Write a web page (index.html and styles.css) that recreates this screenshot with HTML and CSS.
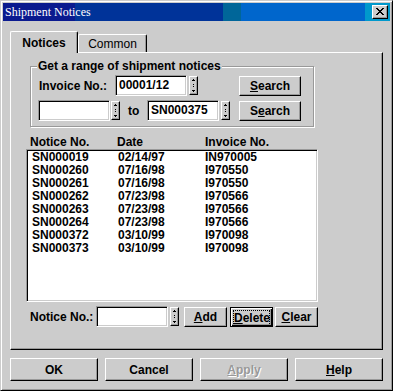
FILE: index.html
```html
<!DOCTYPE html>
<html lang="en">
<head>
  <meta charset="UTF-8" />
  <title>Shipment Notices</title>
  <link rel="stylesheet" href="styles.css">
</head>
<body>
  <div class="window">
    <div class="titlebar">
      <span class="title">Shipment Notices</span>
      <span class="close">
        <svg width="8" height="7" viewBox="0 0 8 7" shape-rendering="crispEdges">
          <path d="M0 0h2v1h-2z M6 0h2v1h-2z M1 1h2v1h-2z M5 1h2v1h-2z M2 2h4v1h-4z M3 3h2v1h-2z M2 4h4v1h-4z M1 5h2v1h-2z M5 5h2v1h-2z M0 6h2v1h-2z M6 6h2v1h-2z" fill="#000"/>
        </svg>
      </span>
    </div>

    <div class="dialog">
      <div class="tabs">
        <div class="tab active">Notices</div>
        <div class="tab">Common</div>
      </div>

      <div class="panel">
        <div class="group">
          <span class="group-title">Get a range of shipment notices</span>
          <div class="row first-row">
            <span class="lbl">Invoice No.:</span>
            <div class="field">00001/12</div>
            <span class="spin"><svg width="5" height="13" viewBox="0 0 5 13" shape-rendering="crispEdges"><path d="M2 0h1v1h-1z M1 1h3v1h-3z M2 5h1v1h-1z M2 7h1v1h-1z M1 11h3v1h-3z M2 12h1v1h-1z" fill="#000"/></svg></span>
            <button class="btn search"><u>S</u>earch</button>
          </div>
          <div class="row second-row">
            <div class="field from"></div>
            <span class="spin near"><svg width="5" height="13" viewBox="0 0 5 13" shape-rendering="crispEdges"><path d="M2 0h1v1h-1z M1 1h3v1h-3z M2 5h1v1h-1z M2 7h1v1h-1z M1 11h3v1h-3z M2 12h1v1h-1z" fill="#000"/></svg></span>
            <span class="to">to</span>
            <div class="field">SN000375</div>
            <span class="spin"><svg width="5" height="13" viewBox="0 0 5 13" shape-rendering="crispEdges"><path d="M2 0h1v1h-1z M1 1h3v1h-3z M2 5h1v1h-1z M2 7h1v1h-1z M1 11h3v1h-3z M2 12h1v1h-1z" fill="#000"/></svg></span>
            <button class="btn search second">S<u>e</u>arch</button>
          </div>
        </div>

        <div class="list-head">
          <span class="c1">Notice No.</span>
          <span class="c2">Date</span>
          <span>Invoice No.</span>
        </div>
        <div class="list" id="noticeList"></div>

        <div class="row notice-row">
          <span class="lbl short">Notice No.:</span>
          <div class="field"></div>
          <span class="spin"><svg width="5" height="13" viewBox="0 0 5 13" shape-rendering="crispEdges"><path d="M2 0h1v1h-1z M1 1h3v1h-3z M2 5h1v1h-1z M2 7h1v1h-1z M1 11h3v1h-3z M2 12h1v1h-1z" fill="#000"/></svg></span>
          <button class="btn small add"><u>A</u>dd</button>
          <button class="btn small default"><span class="focus"><u>D</u>elete</span></button>
          <button class="btn small clear"><u>C</u>lear</button>
        </div>
      </div>

      <div class="actions">
        <button class="btn wide">OK</button>
        <button class="btn wide">Cancel</button>
        <button class="btn wide disabled"><u>A</u>pply</button>
        <button class="btn wide"><u>H</u>elp</button>
      </div>
    </div>
  </div>

  <script>
    const notices = [
      ["SN000019", "02/14/97", "IN970005"],
      ["SN000260", "07/16/98", "I970550"],
      ["SN000261", "07/16/98", "I970550"],
      ["SN000262", "07/23/98", "I970566"],
      ["SN000263", "07/23/98", "I970566"],
      ["SN000264", "07/23/98", "I970566"],
      ["SN000372", "03/10/99", "I970098"],
      ["SN000373", "03/10/99", "I970098"]
    ];

    const list = document.getElementById("noticeList");
    notices.forEach(([no, date, inv]) => {
      list.innerHTML += `
        <div class="item">
          <span class="c1">${no}</span>
          <span class="c2">${date}</span>
          <span>${inv}</span>
        </div>
      `;
    });
  </script>
</body>
</html>
```

FILE: styles.css
```css
:root {
  --face: #cccccc;
  --shadow: #999999;
  --light: #ffffff;
  --dark: #000000;
}

body {
  margin: 0;
  background-color: var(--face);
  font: bold 12px "Liberation Sans", Arial, sans-serif;
  color: var(--dark);
}

.window {
  width: 393px;
  height: 391px;
  box-sizing: border-box;
  border: 1px solid;
  border-color: var(--face) var(--dark) var(--dark) var(--face);
  box-shadow: inset 1px 1px var(--light), inset -1px -1px var(--shadow);
  padding: 2px;
}

.titlebar {
  height: 18px;
  display: flex;
  align-items: center;
  justify-content: space-between;
  padding: 0 2px;
  background: linear-gradient(to right,
    #0a1a8f 0 72px, #003399 72px 220px, #006699 220px 238px,
    #0066cc 238px 362px, #0099cc 362px);
}

.title {
  font: 12px "Liberation Serif", "Times New Roman", serif;
  color: var(--light);
}

.close {
  width: 16px;
  height: 14px;
  box-sizing: border-box;
  border: 1px solid;
  border-color: var(--light) var(--dark) var(--dark) var(--light);
  box-shadow: inset -1px -1px var(--shadow);
  background-color: var(--face);
  display: flex;
  align-items: center;
  justify-content: center;
}

.close svg {
  margin: 0 1px 1px 0;
}

.dialog {
  padding: 10px 7px 0;
}

/* tabs */
.tabs {
  display: flex;
  align-items: flex-end;
  height: 21px;
  position: relative;
  z-index: 1;
}

.tab {
  height: 18px;
  box-sizing: border-box;
  width: 69px;
  border: 1px solid;
  border-color: var(--light) var(--dark) transparent var(--light);
  border-bottom: none;
  border-radius: 2px 2px 0 0;
  box-shadow: inset -1px 0 var(--shadow);
  font-weight: normal;
  display: flex;
  align-items: center;
  justify-content: center;
  padding-top: 1px;
}

.tab.active {
  width: 68px;
  height: 22px;
  margin-bottom: -1px;
  background-color: var(--face);
  font-weight: bold;
  padding-top: 0;
}

.panel {
  height: 298px;
  box-sizing: border-box;
  border: 1px solid;
  border-color: var(--light) var(--dark) var(--dark) var(--light);
  box-shadow: inset -1px -1px var(--shadow);
}

/* group box */
.group {
  margin: 13px 0 0 19px;
  width: 284px;
  box-sizing: border-box;
  border: 1px solid var(--shadow);
  box-shadow: 1px 1px var(--light), inset 1px 1px var(--light);
  padding: 0 0 5px 8px;
}

.group-title {
  display: table;
  margin: -8px 0 0 -2px;
  padding: 0 1px;
  line-height: 14px;
  background-color: var(--face);
}

.row {
  display: flex;
  align-items: center;
  height: 21px;
}

.first-row {
  margin-top: 2px;
}

.second-row {
  margin-top: 4px;
}

.lbl {
  width: 76px;
}

.lbl.short {
  width: 66px;
}

.field {
  width: 72px;
  height: 21px;
  box-sizing: border-box;
  border: 1px solid;
  border-color: var(--shadow) var(--light) var(--light) var(--shadow);
  box-shadow: inset 1px 1px var(--dark), inset -1px -1px var(--face);
  background-color: var(--light);
  padding: 0 3px;
  line-height: 19px;
}

.field.from {
  margin-left: -1px;
}

.spin {
  width: 9px;
  height: 19px;
  box-sizing: border-box;
  margin-left: 2px;
  border: 1px solid;
  border-color: var(--light) var(--dark) var(--dark) var(--light);
  box-shadow: inset -1px -1px var(--shadow);
  display: flex;
  align-items: center;
  justify-content: center;
}

.spin.near {
  margin-left: 1px;
}

.spin svg {
  margin: 0 1px 1px 0;
}

.to {
  margin-left: 8px;
  width: 19px;
}

/* buttons */
.btn {
  font: bold 12px "Liberation Sans", Arial, sans-serif;
  color: var(--dark);
  background-color: var(--face);
  height: 20px;
  box-sizing: border-box;
  padding: 0;
  border: 1px solid;
  border-color: var(--light) var(--dark) var(--dark) var(--light);
  box-shadow: inset -1px -1px var(--shadow);
}

.btn.search {
  width: 62px;
  margin-left: 41px;
}

.btn.search.second {
  margin-left: 9px;
}

.btn.small {
  width: 43px;
}

.btn.add {
  margin-left: 5px;
}

.btn.default {
  margin-left: 3px;
  border-color: var(--dark);
  box-shadow: inset 1px 1px var(--light), inset -1px -1px var(--dark), inset -2px -2px var(--shadow);
  padding: 2px;
}

.btn.default .focus {
  display: block;
  height: 16px;
  line-height: 14px;
  box-sizing: border-box;
  border: 1px dotted var(--dark);
}

.btn.clear {
  margin-left: 2px;
}

.btn.wide {
  width: 88px;
  height: 23px;
}

.btn.disabled {
  color: var(--shadow);
  text-shadow: 1px 1px var(--light);
}

/* list */
.list-head {
  display: flex;
  margin: 9px 0 0 19px;
  line-height: 13px;
}

.c1 {
  width: 87px;
}

.c2 {
  width: 88px;
}

.list {
  margin-left: 15px;
  width: 292px;
  height: 153px;
  box-sizing: border-box;
  background-color: var(--light);
  border: 1px solid;
  border-color: var(--shadow) var(--light) var(--light) var(--shadow);
  box-shadow: inset 1px 1px var(--dark), inset -1px -1px var(--face);
  padding: 1px 0 0 5px;
}

.list .item {
  display: flex;
  line-height: 13px;
}

.list .item .c1 {
  width: 86px;
}

.list .item .c2 {
  width: 87px;
}

.notice-row {
  margin: 4px 0 0 19px;
}

.actions {
  display: flex;
  gap: 7px;
  margin-top: 8px;
}
```
